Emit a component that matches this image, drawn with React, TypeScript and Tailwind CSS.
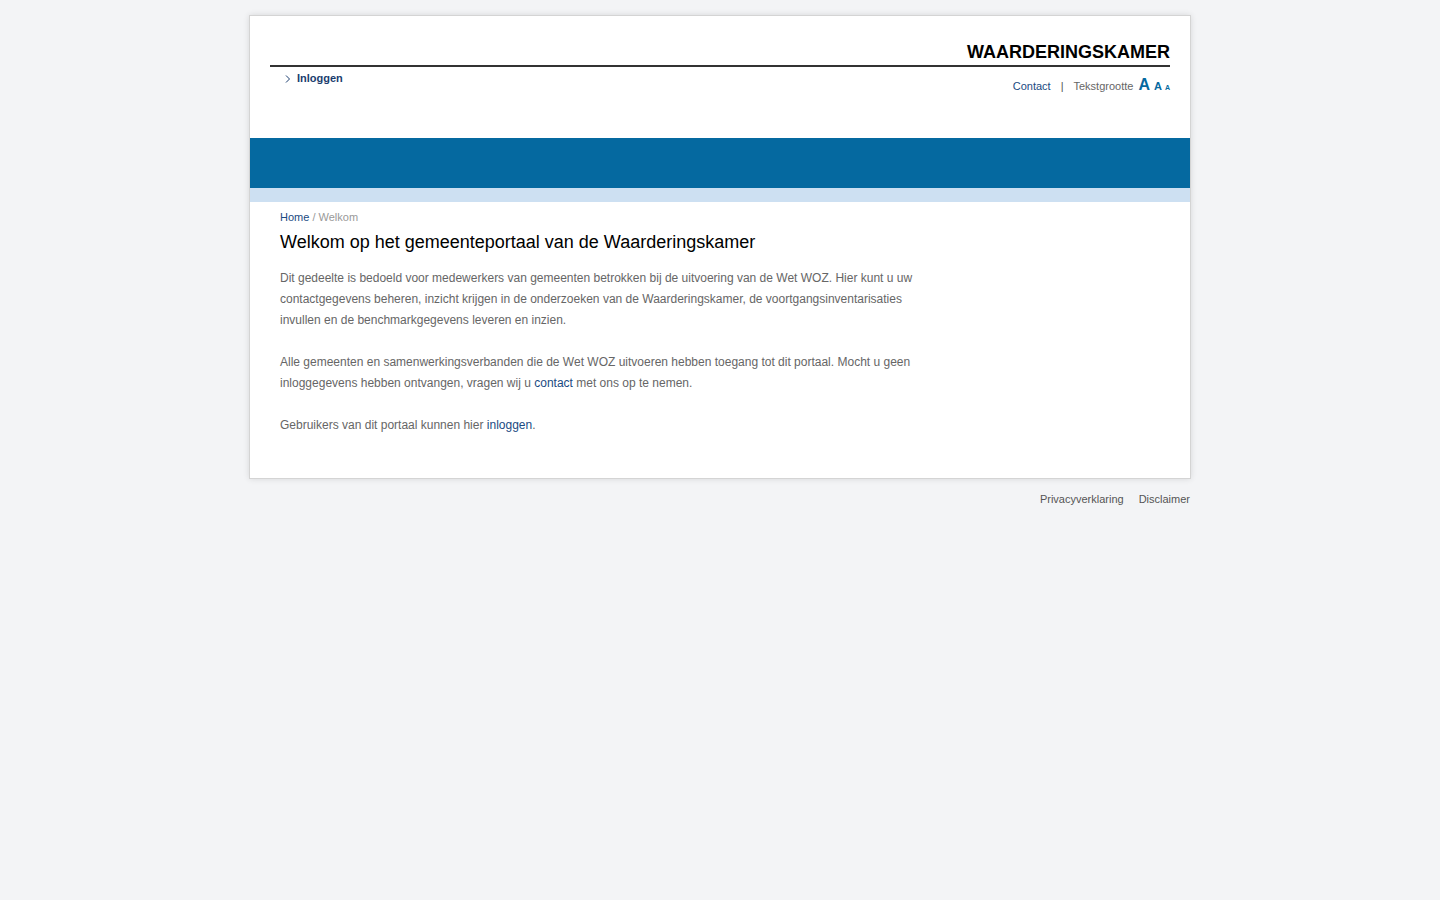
const App = () => (
  <div className="min-h-[900px] bg-[#f3f4f6] pt-[15px] font-['Liberation_Sans',Arial,sans-serif]">
    <div className="mx-auto w-[942px] border border-[#d4d4d4] bg-white shadow-[0_0_6px_rgba(0,0,0,0.12)]">
      <header className="h-[122px] px-5 pt-[26px]">
        <div className="border-b-2 border-[#333] pb-[2px] text-right text-[18px] font-bold leading-[21px] text-black">
          WAARDERINGSKAMER
        </div>
        <div className="flex items-start justify-between">
          <div className="mt-[5px] flex items-center pl-[15px]">
            <svg width="6" height="8" viewBox="0 0 6 8" className="mr-[6px]">
              <path d="M1 0.5 L4.5 4 L1 7.5" fill="none" stroke="#1a3d6e" strokeWidth="1" />
            </svg>
            <span className="text-[11px] font-bold leading-[13px] text-[#1a3d6e]">Inloggen</span>
          </div>
          <div className="mt-[11px] flex items-baseline text-[11px] leading-[13px]">
            <span className="text-[#1a4a82]">Contact</span>
            <span className="mx-[10px] text-[#555]">|</span>
            <span className="text-[#666]">Tekstgrootte</span>
            <span className="ml-[5px] text-[16px] font-bold text-[#0569a0]">A</span>
            <span className="ml-[4px] text-[11px] font-bold text-[#0569a0]">A</span>
            <span className="ml-[3px] text-[7px] font-bold text-[#0569a0]">A</span>
          </div>
        </div>
      </header>
      <div className="h-[50px] bg-[#0569a0]" />
      <div className="h-[14px] bg-[#cde0f2]" />
      <main className="px-[30px] pb-[42px] pt-[8px]">
        <div className="text-[11px] leading-[14px]">
          <span className="text-[#1a4a82]">Home</span>
          <span className="text-[#999]"> / Welkom</span>
        </div>
        <h1 className="mt-[6px] text-[18px] leading-[24px] text-black">
          Welkom op het gemeenteportaal van de Waarderingskamer
        </h1>
        <div className="mt-[14px] w-[640px] text-[12px] leading-[21px] text-[#666]">
          <p className="mb-[21px]">
            Dit gedeelte is bedoeld voor medewerkers van gemeenten betrokken bij de uitvoering van de Wet WOZ. Hier kunt u uw contactgegevens beheren, inzicht krijgen in de onderzoeken van de Waarderingskamer, de voortgangsinventarisaties invullen en de benchmarkgegevens leveren en inzien.
          </p>
          <p className="mb-[21px]">
            Alle gemeenten en samenwerkingsverbanden die de Wet WOZ uitvoeren hebben toegang tot dit portaal. Mocht u geen inloggegevens hebben ontvangen, vragen wij u <span className="text-[#1a4a82]">contact</span> met ons op te nemen.
          </p>
          <p>
            Gebruikers van dit portaal kunnen hier <span className="text-[#1a4a82]">inloggen</span>.
          </p>
        </div>
      </main>
    </div>
    <div className="mx-auto flex w-[942px] justify-end gap-[15px] pr-px pt-[14px] text-[11px] leading-[13px] text-[#555]">
      <span>Privacyverklaring</span>
      <span>Disclaimer</span>
    </div>
  </div>
);

export default App;
